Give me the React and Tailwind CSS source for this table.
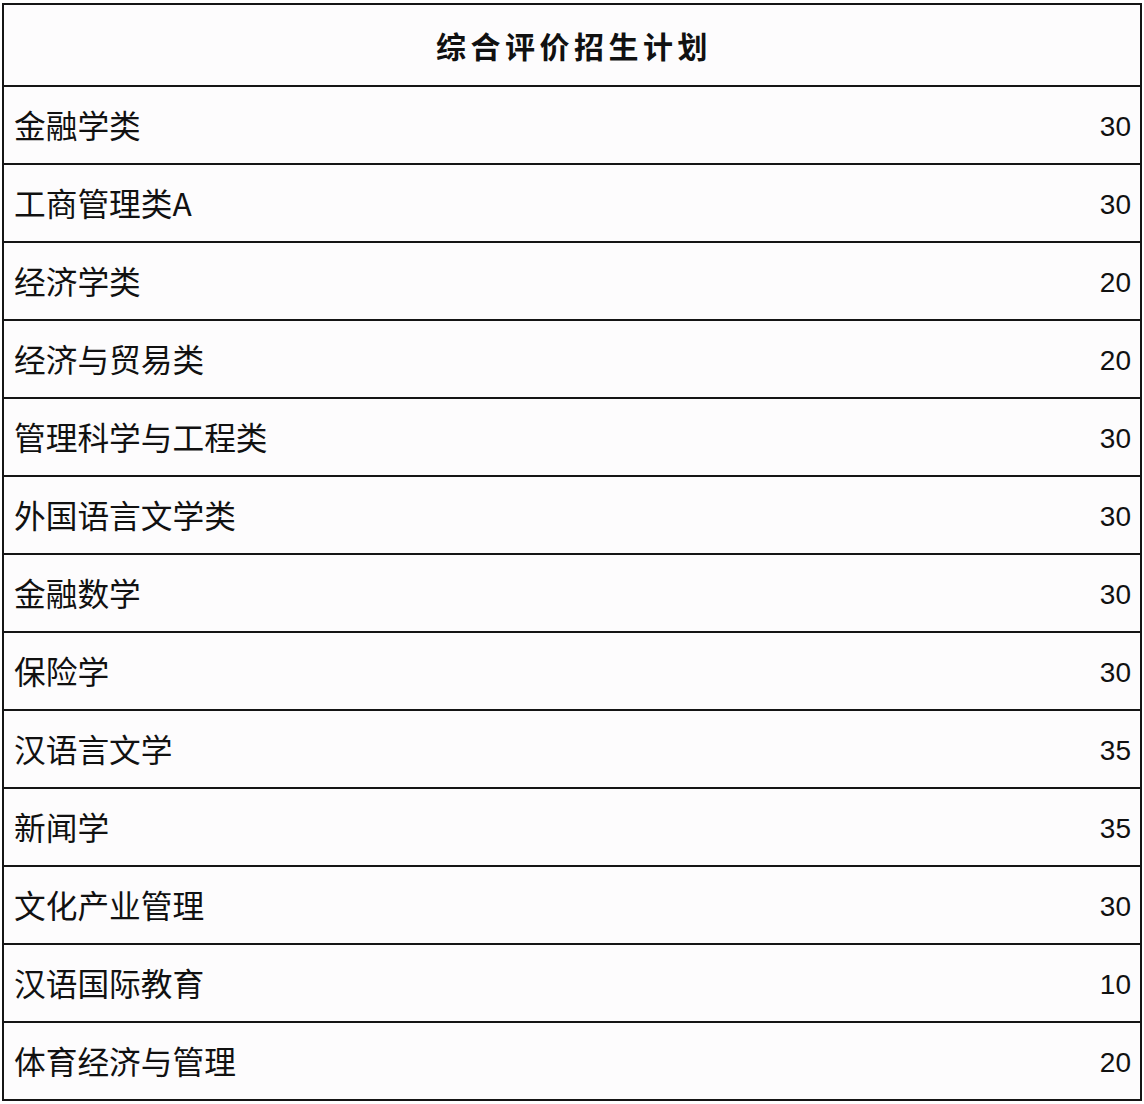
const rows = [
  ['金融学类', '30'],
  ['工商管理类A', '30'],
  ['经济学类', '20'],
  ['经济与贸易类', '20'],
  ['管理科学与工程类', '30'],
  ['外国语言文学类', '30'],
  ['金融数学', '30'],
  ['保险学', '30'],
  ['汉语言文学', '35'],
  ['新闻学', '35'],
  ['文化产业管理', '30'],
  ['汉语国际教育', '10'],
  ['体育经济与管理', '20'],
]

export default function App() {
  return (
    <div className="bg-white min-h-screen pt-[3px] pl-[2px] text-[#111] font-['Liberation_Sans','Noto_Sans_CJK_SC',sans-serif]">
      <div className="w-[1140px] border-2 border-b-0 border-[#151515] bg-[#fdfcfd]">
        <div className="h-[82px] border-b-2 border-[#151515] flex items-center justify-center">
          <h1 className="text-[30px] font-bold tracking-[4.5px] pl-[4px] font-['Noto_Sans_CJK_SC',sans-serif]">综合评价招生计划</h1>
        </div>
        {rows.map(([name, count]) => (
          <div key={name} className="h-[78px] border-b-2 border-[#151515] flex items-center justify-between pl-[10px] pr-[9px]">
            <span className="text-[31.7px] font-['Noto_Sans_CJK_SC',sans-serif]">{name}</span>
            <span className="text-[28px] pt-[4px]">{count}</span>
          </div>
        ))}
      </div>
    </div>
  )
}
